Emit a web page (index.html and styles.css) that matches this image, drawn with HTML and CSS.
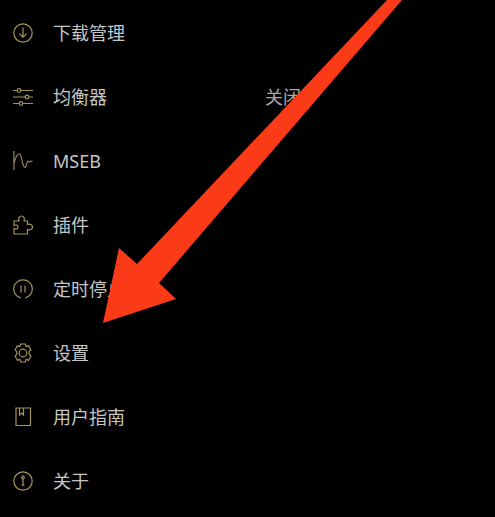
FILE: index.html
```html
<!DOCTYPE html>
<html lang="zh-CN">
<head>
<meta charset="utf-8">
<title>菜单</title>
<link rel="stylesheet" href="styles.css">
</head>
<body>
<main class="screen">
  <ul class="menu">
    <li class="row">
      <svg class="icon" viewBox="0 0 20 20"><circle cx="10" cy="10" r="9.2"/><path d="M10 4.5v9.5M6.3 10.6 10 14.2l3.7-3.6"/></svg>
      <span class="label">下载管理</span>
    </li>
    <li class="row">
      <svg class="icon" viewBox="0 0 20 20"><path d="M0 3.5h4.2M7.8 3.5H20M0 10h12.2M15.8 10H20M0 16.5h6.2M9.8 16.5H20"/><circle cx="6" cy="3.5" r="1.8"/><circle cx="14" cy="10" r="1.8"/><circle cx="8" cy="16.500" r="1.8"/></svg>
      <span class="label">均衡器</span>
      <span class="value">关闭</span>
    </li>
    <li class="row">
      <svg class="icon icon-wide" viewBox="0 0 22 22"><path d="M1 0v21M1 14C3 6 5 3 7 3c3 0 3 15 6 15 2 0 2-7 3.500-7 1 0 1 2 2 1 .5-.5 1-1 3-1"/></svg>
      <span class="label">MSEB</span>
    </li>
    <li class="row">
      <svg class="icon" viewBox="0 0 20 20"><path d="M1 19v-5.500c2 1 4 .5 4-1.500S3 9.500 1 10.500V6h5C5 3 6.500 1 8.500 1S12 3 11 6h3.500v3.500C17 8.500 19.500 9.500 19.500 12s-2.500 3.500-5 2.500V19z"/></svg>
      <span class="label">插件</span>
    </li>
    <li class="row">
      <svg class="icon" viewBox="0 0 20 20"><path d="M10 .8a9.200 9.200 0 0 1 2 18.200M8 19A9.200 9.200 0 0 1 10 .8M8 6.500v7M12 6.500v7"/></svg>
      <span class="label">定时停止</span>
    </li>
    <li class="row">
      <svg class="icon" viewBox="0 0 20 20"><path d="M7.700 1h4.600l.8 2.500 2.500-.7 2.300 4-1.800 1.900.1 2.600 1.700 1.900-2.300 4-2.500-.7-.8 2.500H7.700l-.8-2.500-2.500.7-2.300-4 1.700-1.900V8.700L2.100 6.800l2.300-4 2.500.7z"/><circle cx="10" cy="10" r="3.800"/></svg>
      <span class="label">设置</span>
    </li>
    <li class="row">
      <svg class="icon" viewBox="0 0 20 20"><path d="M3 1h14.500v17.500H3zM6.500 1v7l2-2 2 2V1"/></svg>
      <span class="label">用户指南</span>
    </li>
    <li class="row">
      <svg class="icon" viewBox="0 0 20 20"><circle cx="10" cy="10" r="9.200"/><circle cx="10" cy="6.500" r="1.300"/><path d="M10 8v6M8.600 14.200h2.800"/></svg>
      <span class="label">关于</span>
    </li>
  </ul>
  <svg class="arrow" viewBox="0 0 495 517"><polygon points="387,0 402,0 159,283 176,299 103,323 119,248 137,264"/></svg>
</main>
</body>
</html>
```
FILE: styles.css
```css
html, body {
  margin: 0;
  padding: 0;
  background: #000;
}
.screen {
  position: relative;
  width: 495px;
  height: 517px;
  overflow: hidden;
  background: #000;
  font-family: "Noto Sans", "Noto Sans CJK SC", sans-serif;
  color: #c6c6c6;
}
.menu {
  list-style: none;
  margin: 0;
  padding: 1px 0 0;
}
.row {
  display: flex;
  align-items: center;
  height: 64px;
  padding-left: 13px;
  font-size: 18px;
  line-height: 24px;
}
.icon {
  flex: none;
  width: 20px;
  height: 20px;
  margin-right: 20px;
  fill: none;
  stroke: #a3945a;
  stroke-width: 1.2;
}
.label {
  width: 212px;
  flex: none;
  white-space: nowrap;
}
.value {
  color: #a8a8a8;
  font-size: 18px;
}
.arrow {
  position: absolute;
  inset: 0;
  width: 495px;
  height: 517px;
  fill: #fb3a17;
}
```
